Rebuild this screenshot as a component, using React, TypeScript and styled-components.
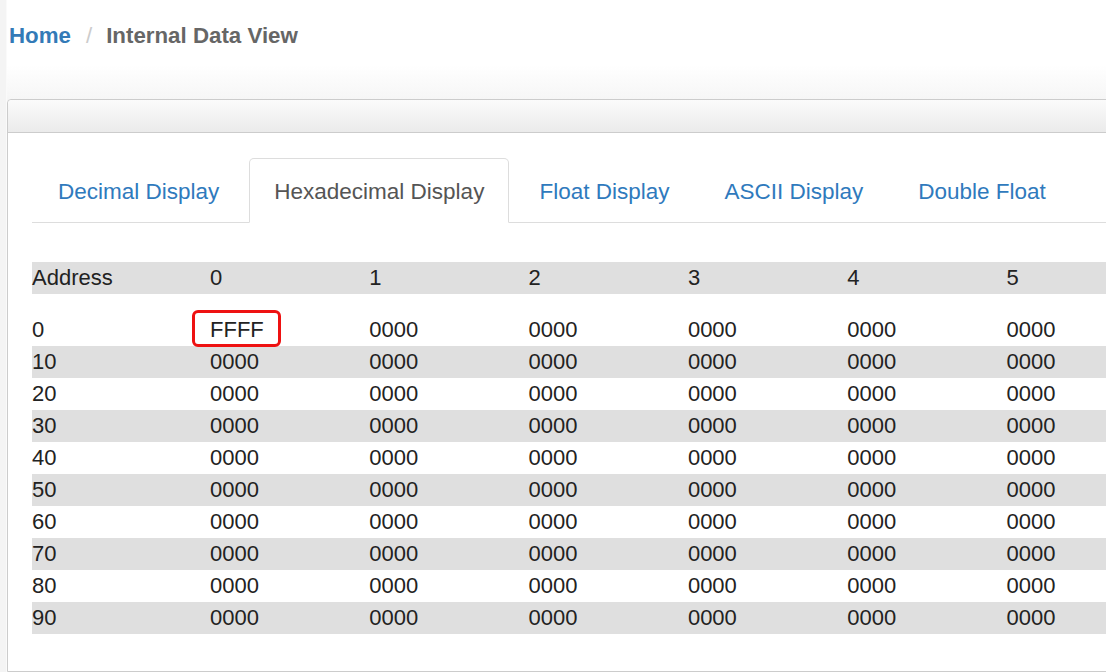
import React from "react";
import styled, { createGlobalStyle } from "styled-components";

const GlobalStyle = createGlobalStyle`
  html, body {
    margin: 0;
    padding: 0;
    background: #ffffff;
    font-family: "Liberation Sans", Arial, sans-serif;
    overflow: hidden;
  }
  #root { width: 1106px; height: 672px; overflow: hidden; }
`;

const Page = styled.div`
  display: flex;
  width: 1106px;
  height: 672px;
  overflow: hidden;
`;

const EdgeStrip = styled.div`
  width: 7px;
  flex: none;
  background: #f4f4f4;
  border-right: 1px solid #fafafa;
  box-sizing: border-box;
`;

const Main = styled.div`
  flex: 1;
  min-width: 0;
  display: flex;
  flex-direction: column;
`;

const Breadcrumb = styled.nav`
  height: 65px;
  display: flex;
  align-items: center;
  padding: 7px 0 0 2px;
  box-sizing: border-box;
  font-size: 22.3px;
  font-weight: bold;
`;

const Crumb = styled.span<{ $active?: boolean }>`
  color: ${(p) => (p.$active ? "#666666" : "#337ab7")};
`;

const Divider = styled.span`
  color: #cccccc;
  font-weight: normal;
  padding: 0 14px 0 15px;
`;

const Content = styled.div`
  flex: 1;
  padding-top: 34px;
  background: linear-gradient(to bottom, #ffffff 0px, #f6f6f6 34px);
`;

const Panel = styled.section`
  width: 1900px;
  height: 100%;
  background: #ffffff;
  border: 1px solid #cccccc;
  border-radius: 4px 0 0 0;
  box-sizing: border-box;
`;

const PanelHeading = styled.div`
  height: 32px;
  background: linear-gradient(to bottom, #fbfbfb, #ebebeb);
  border-bottom: 1px solid #cccccc;
  border-radius: 4px 0 0 0;
`;

const PanelBody = styled.div`
  padding: 25px 0 0 24px;
`;

const TabList = styled.ul`
  list-style: none;
  margin: 0;
  padding: 0 0 0 1px;
  display: flex;
  height: 64px;
  border-bottom: 1px solid #dddddd;
`;

const Tab = styled.li<{ $active?: boolean }>`
  display: flex;
  align-items: center;
  padding: 3px 24px 0;
  margin-right: 5px;
  margin-bottom: ${(p) => (p.$active ? "-1px" : "0")};
  font-size: 22.5px;
  color: ${(p) => (p.$active ? "#555555" : "#2f7abd")};
  background: ${(p) => (p.$active ? "#ffffff" : "transparent")};
  border: 1px solid ${(p) => (p.$active ? "#dddddd" : "transparent")};
  border-bottom-color: transparent;
  border-radius: 5px 5px 0 0;
`;

const Table = styled.table`
  margin-top: 39px;
  border-collapse: collapse;
  table-layout: fixed;
  width: 1771px;
  font-size: 22px;
  color: #222222;
`;

const HeadRow = styled.tr`
  background: #dfdfdf;
  height: 32px;
`;

const SpacerRow = styled.tr`
  height: 20px;
`;

const Row = styled.tr<{ $shaded: boolean }>`
  height: 32px;
  background: ${(p) => (p.$shaded ? "#dfdfdf" : "#ffffff")};
`;

const Cell = styled.td`
  padding: 0;
  text-align: left;
  white-space: nowrap;
  vertical-align: middle;
  line-height: 32px;
`;

const HeadCell = styled.th`
  padding: 0;
  text-align: left;
  font-weight: normal;
  white-space: nowrap;
  line-height: 32px;
`;

const MarkedCell = styled(Cell)`
  position: relative;
`;

const Highlight = styled.span`
  position: absolute;
  left: -18px;
  top: -4px;
  width: 89px;
  height: 37px;
  border: 3px solid #ee1111;
  border-radius: 6px;
  box-sizing: border-box;
  pointer-events: none;
`;

const tabs = [
  "Decimal Display",
  "Hexadecimal Display",
  "Float Display",
  "ASCII Display",
  "Double Float",
];

const cols = Array.from({ length: 10 }, (_, i) => i);
const rows = Array.from({ length: 10 }, (_, i) => i * 10);

export default function App() {
  return (
    <>
      <GlobalStyle />
      <Page>
        <EdgeStrip />
        <Main>
          <Breadcrumb>
            <Crumb>Home</Crumb>
            <Divider>/</Divider>
            <Crumb $active>Internal Data View</Crumb>
          </Breadcrumb>
          <Content>
            <Panel>
              <PanelHeading />
              <PanelBody>
                <TabList>
                  {tabs.map((t) => (
                    <Tab key={t} $active={t === "Hexadecimal Display"}>
                      {t}
                    </Tab>
                  ))}
                </TabList>
                <Table>
                  <colgroup>
                    <col style={{ width: 178 }} />
                    {cols.map((c) => (
                      <col key={c} style={{ width: 159.3 }} />
                    ))}
                  </colgroup>
                  <thead>
                    <HeadRow>
                      <HeadCell>Address</HeadCell>
                      {cols.map((c) => (
                        <HeadCell key={c}>{c}</HeadCell>
                      ))}
                    </HeadRow>
                  </thead>
                  <tbody>
                    <SpacerRow>
                      <Cell colSpan={11} />
                    </SpacerRow>
                    {rows.map((r, ri) => (
                      <Row key={r} $shaded={ri % 2 === 1}>
                        <Cell>{r}</Cell>
                        {cols.map((c) =>
                          r === 0 && c === 0 ? (
                            <MarkedCell key={c}>
                              FFFF
                              <Highlight />
                            </MarkedCell>
                          ) : (
                            <Cell key={c}>0000</Cell>
                          )
                        )}
                      </Row>
                    ))}
                  </tbody>
                </Table>
              </PanelBody>
            </Panel>
          </Content>
        </Main>
      </Page>
    </>
  );
}
